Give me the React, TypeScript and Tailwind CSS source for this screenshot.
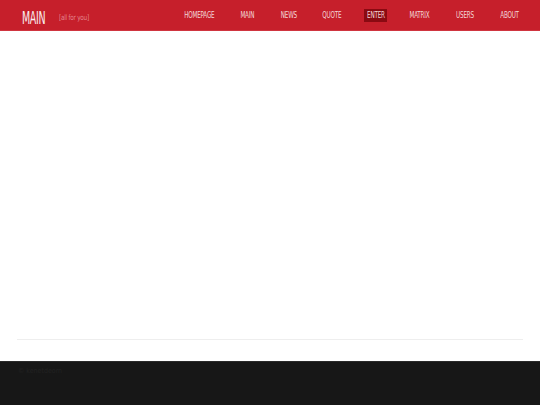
import React from "react";

const nav: [string, string][] = [
  ["HOMEPAGE", "w-[36px]"],
  ["MAIN", "w-[22px]"],
  ["NEWS", "w-[23px]"],
  ["QUOTE", "w-[26px]"],
  ["ENTER", "w-[23px]"],
  ["MATRIX", "w-[27px]"],
  ["USERS", "w-[26px]"],
  ["ABOUT", "w-[26px]"],
];

export default function App() {
  const font = { fontFamily: '"DejaVu Sans Condensed", "DejaVu Sans", sans-serif' };
  return (
    <div className="w-[540px] h-[405px] flex flex-col bg-white overflow-hidden font-stretch-condensed" style={font}>
      <header className="h-[31px] shrink-0 bg-[#c61f2b] border-b border-[#d03540] flex items-center pl-[22px] pr-[17px]">
        <div className="w-[24px] mt-[7px] whitespace-nowrap">
          <span className="inline-block origin-left scale-x-[0.62] text-[17px] font-extralight leading-none text-[#f8eced] tracking-[-0.5px]">MAIN</span>
        </div>
        <div className="ml-[13px] w-[31px] mb-[1px] whitespace-nowrap">
          <span className="inline-block origin-left scale-x-[0.85] text-[7.5px] leading-none text-[#e4838b] tracking-[-0.3px]">[all for you]</span>
        </div>
        <nav className="ml-auto flex items-center gap-[19px]">
          {nav.map(([n, w]) => (
            <div
              key={n}
              className={
                w +
                " h-[13px] flex items-center justify-center whitespace-nowrap " +
                (n === "ENTER" ? "bg-[#8a0a12]" : "")
              }
            >
              <span className="inline-block scale-x-[0.74] text-[8.5px] leading-none tracking-[-0.3px] text-[#f3d6d8] mt-[1px]">{n}</span>
            </div>
          ))}
        </nav>
      </header>
      <main className="flex-1 flex flex-col justify-end px-[17px] pb-[21px]">
        <div className="h-px bg-[#eeeeee]" />
      </main>
      <footer className="h-[44px] shrink-0 bg-[#171717] border-t border-[#2a2a2a] pl-[18px] pt-[4px]">
        <div className="text-[7px] text-[#222222]">© kenetdeorn</div>
      </footer>
    </div>
  );
}
